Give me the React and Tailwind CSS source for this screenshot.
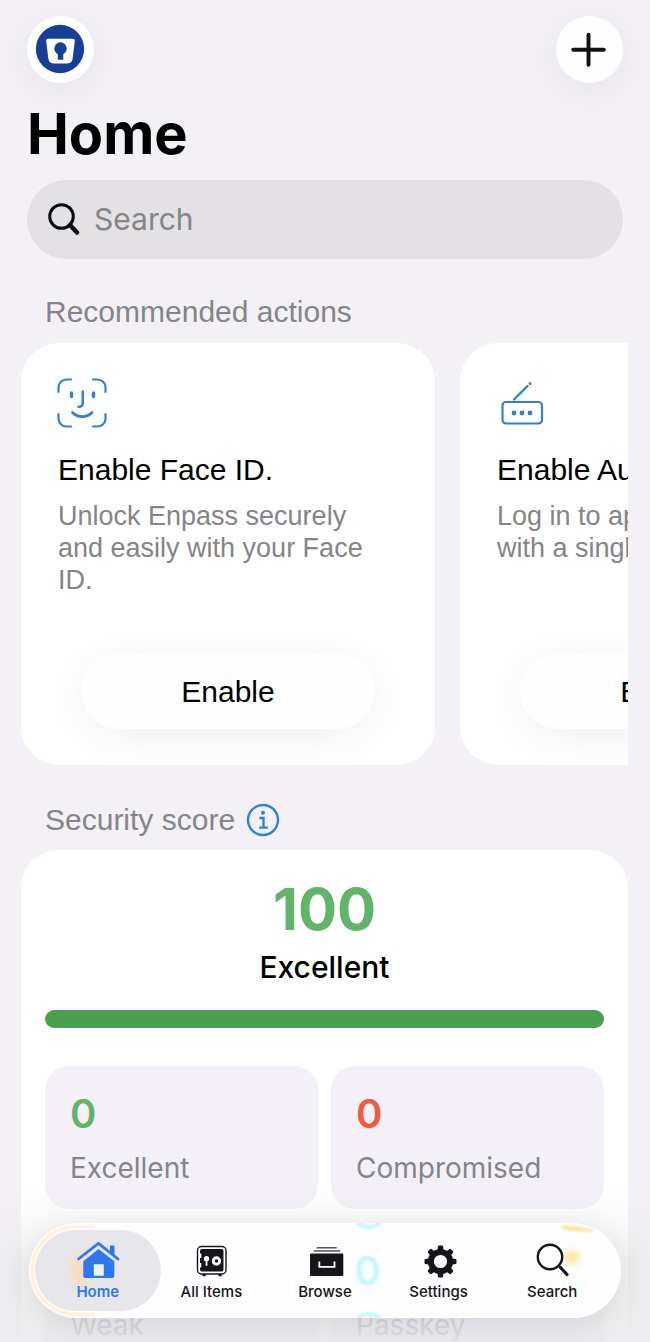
import { useState } from 'react';

const actions = [
  {
    id: 'face-id',
    icon: FaceIdIcon,
    title: 'Enable Face ID.',
    description: 'Unlock Enpass securely and easily with your Face ID.',
  },
  {
    id: 'autofill',
    icon: AutofillIcon,
    title: 'Enable AutoFill.',
    description: 'Log in to apps and sites with a single tap.',
  },
];

const scores = [
  { label: 'Excellent', value: 0, color: 'text-[#62b46a]' },
  { label: 'Compromised', value: 0, color: 'text-[#f5583f]' },
  { label: 'Weak', value: 0, color: 'text-[#ffb347]' },
  { label: 'Passkey', value: 0, color: 'text-[#3fdcff]' },
];

const tabs = [
  { id: 'home', label: 'Home', icon: HomeIcon },
  { id: 'items', label: 'All Items', icon: SafeIcon },
  { id: 'browse', label: 'Browse', icon: DrawerIcon },
  { id: 'settings', label: 'Settings', icon: GearIcon },
  { id: 'search', label: 'Search', icon: TabSearchIcon },
];

function EnpassLogo() {
  return (
    <svg viewBox="0 0 68 68" className="size-full" aria-hidden="true">
      <circle cx="33.500" cy="33.500" r="24.500" fill="#173f98" />
      <path d="M22 23h24a2.500 2.500 0 0 1 2.500 2.900l-2.200 17.600a5.500 5.500 0 0 1-5.400 4.700H27.100a5.500 5.500 0 0 1-5.400-4.700L19.500 25.900A2.500 2.500 0 0 1 22 23Z" fill="#fff" />
      <circle cx="34" cy="33" r="6.300" fill="#173f98" />
      <path d="M31.200 36h5.600v8.500h-5.600z" fill="#173f98" />
    </svg>
  );
}

function FaceIdIcon() {
  return (
    <svg viewBox="0 0 50 50" className="-ml-px h-[50px] w-[50px]" fill="none" stroke="#2f80de" strokeWidth="2.200" strokeLinecap="round" aria-hidden="true">
      <path d="M1.500 14V9.500a8 8 0 0 1 8-8H14M36 1.500h4.500a8 8 0 0 1 8 8V14M48.500 36v4.500a8 8 0 0 1-8 8H36M14 48.500H9.500a8 8 0 0 1-8-8V36" />
      <path d="M14.500 15v3.500M36.500 15v3.500" strokeWidth="3.400" />
      <path d="M25.800 13.500V25c0 2.500-1.300 3.800-4.300 3.800" strokeWidth="2.500" />
      <path d="M15.500 34.500c5.500 5.500 14 5.500 19.500 0" strokeWidth="2.800" />
    </svg>
  );
}

function AutofillIcon() {
  return (
    <svg viewBox="0 0 50 50" className="h-[50px] w-[50px]" fill="none" stroke="#2f80de" strokeWidth="2.200" strokeLinecap="round" aria-hidden="true">
      <rect x="5.500" y="24" width="39.500" height="21.500" rx="3.500" />
      <path d="M17 21.500 30.500 8" strokeWidth="2.400" />
      <circle cx="33" cy="5.500" r="1.500" fill="#2f80de" stroke="none" />
      <g fill="#2f80de" stroke="none">
        <circle cx="17" cy="35" r="2.400" />
        <circle cx="25" cy="35" r="2.400" />
        <circle cx="33" cy="35" r="2.400" />
      </g>
    </svg>
  );
}

function InfoIcon() {
  return (
    <svg viewBox="0 0 34 34" className="size-[34px]" fill="none" stroke="#2a7de8" strokeWidth="2.300" aria-hidden="true">
      <circle cx="17" cy="17" r="15" strokeWidth="2.300" />
      <circle cx="17" cy="9.700" r="2" fill="#2a7de8" stroke="none" />
      <path d="M13.500 15h4v9.500M13.200 24.700h8.600" />
    </svg>
  );
}

function HomeIcon() {
  return (
    <svg viewBox="0 0 44 40" className="h-10 w-11" aria-hidden="true">
      <path d="M34 5.500h4.500V17L34 13.500z" fill="#2e77ee" />
      <path d="M2.500 19 22.500 3.300 42 19" fill="none" stroke="#2e77ee" strokeWidth="2.800" strokeLinecap="round" strokeLinejoin="round" />
      <path d="M22.500 9 38.300 21.300V36a2 2 0 0 1-2 2H9.300a2 2 0 0 1-2-2V21.300Z" fill="#2e77ee" />
      <path d="M17.800 24.300h10v11.500h-10z" fill="#f1f0f3" />
    </svg>
  );
}

function SafeIcon() {
  return (
    <svg viewBox="0 0 44 40" className="h-10 w-11" aria-hidden="true">
      <path d="M13.500 34h3.200v2.300h-3.200zM29.500 34h3.200v2.300h-3.200z" fill="#16151a" />
      <rect x="8.500" y="6.500" width="28.500" height="27.500" rx="4" fill="#fff" stroke="#16151a" strokeWidth="1.400" />
      <rect x="11" y="9" width="23.500" height="22.500" rx="2" fill="#16151a" />
      <path d="M10.500 13.500h1.800v4.500h-1.800zM10.500 23h1.800v4.500h-1.800z" fill="#fff" />
      <circle cx="17.500" cy="18.700" r="2.700" fill="#fff" />
      <path d="M16.700 19h1.700v6.800h-1.700z" fill="#fff" />
      <circle cx="27.400" cy="21" r="3.200" fill="#16151a" stroke="#fff" strokeWidth="3" />
    </svg>
  );
}

function DrawerIcon() {
  return (
    <svg viewBox="0 0 44 40" className="h-10 w-11" fill="none" aria-hidden="true">
      <path d="M13.700 7.800h20M10.700 11h26.500" stroke="#55545a" strokeWidth="1.500" />
      <rect x="7" y="13.400" width="33.300" height="22.600" rx="1" fill="#16151a" />
      <path d="M16.300 21.500V26.800h15.200V21.500" stroke="#fff" strokeWidth="1.800" />
    </svg>
  );
}

function GearIcon() {
  return (
    <svg viewBox="0 0 44 40" className="h-10 w-11" aria-hidden="true">
      <circle cx="23.500" cy="21.500" r="9.600" fill="none" stroke="#16151a" strokeWidth="6" />
      <g fill="#16151a">
        {[0, 45, 90, 135, 180, 225, 270, 315].map((deg) => (
          <path key={deg} d="M20.300 11.500 21 6.200q.2-.7.900-.7h3.200q.7 0 .9.700l.7 5.300z" transform={`rotate(${deg} 23.5 21.5)`} />
        ))}
      </g>
    </svg>
  );
}

function TabSearchIcon() {
  return (
    <svg viewBox="0 0 44 40" className="h-10 w-11" fill="none" stroke="#16151a" strokeLinecap="round" aria-hidden="true">
      <circle cx="20" cy="17" r="12.200" strokeWidth="2.400" />
      <path d="m29 26 2 2" strokeWidth="2.400" />
      <path d="m30.500 27.500 6.500 7" strokeWidth="3.200" />
    </svg>
  );
}

function ActionCard({ action }) {
  const Icon = action.icon;
  return (
    <article className="flex h-[422px] w-[414px] shrink-0 flex-col overflow-hidden rounded-[38px] bg-white px-[37px] pt-[35px] pb-9">
      <Icon />
      <h3 className="mt-6 text-[30px] leading-9 text-black">{action.title}</h3>
      <p className="mt-3 pr-5 text-[27px] leading-8 text-[#858488]">{action.description}</p>
      <button
        type="button"
        className="mx-[23px] mt-auto h-[76px] rounded-full bg-[#fefdff] text-[30px] text-black shadow-[0_8px_40px_rgba(0,0,0,0.06)]"
      >
        Enable
      </button>
    </article>
  );
}

function ScoreTile({ score }) {
  return (
    <div className="rounded-3xl bg-[#f3f1f7] px-[25px] pt-6 pb-[23px] font-[Inter,sans-serif]">
      <div className={`text-[40px] leading-[48px] font-semibold ${score.color}`}>{score.value}</div>
      <div className="mt-3 text-[28px] leading-9 text-[#858489]">{score.label}</div>
    </div>
  );
}

function TabBar({ active, onChange }) {
  return (
    <nav className="absolute inset-x-[29px] bottom-6 flex h-[95px] overflow-hidden rounded-full bg-[#fefdff] px-3 py-[7px] font-[Inter,sans-serif] shadow-[0_6px_36px_rgba(0,0,0,0.11)]">
      {/* light caught by the glass edges */}
      <svg className="absolute inset-y-0 left-0 h-full w-20" viewBox="0 0 80 95" fill="none" aria-hidden="true">
        <path d="M66 3.500H48C23 3.500 3 23 3 47.500S23 91.500 48 91.500h18" stroke="#ffe6c8" strokeWidth="2" className="blur-[1px]" />
      </svg>
      <svg className="absolute inset-y-0 right-0 h-full w-20" viewBox="0 0 80 95" fill="none" aria-hidden="true">
        <path d="M20 4q16-1 32 4l-24-1z" fill="#ffe08a" stroke="#ffe7a6" strokeWidth="2" className="blur-[1px]" />
        <ellipse cx="31" cy="34" rx="8" ry="7" fill="#ffe6a0" className="blur-[3px]" />
      </svg>
      {/* tile numbers refracted through the bar */}
      <span className="absolute inset-y-0 left-[55%] flex items-center text-[40px] font-semibold text-[#c4f6ff] blur-[1px]" aria-hidden="true">
        0
      </span>
      <svg className="absolute inset-y-0 left-[55%] h-full w-7" viewBox="0 0 28 95" fill="none" stroke="#c4f6ff" strokeWidth="4" aria-hidden="true">
        <path d="M2 0q12 8 23 0M2 95q12-8 23 0" className="blur-[1px]" />
      </svg>
      {tabs.map((tab) => {
        const Icon = tab.icon;
        const isActive = tab.id === active;
        return (
          <button
            key={tab.id}
            type="button"
            onClick={() => onChange(tab.id)}
            aria-current={isActive ? 'page' : undefined}
            className="relative flex flex-1 flex-col items-center pt-2.5"
          >
            {isActive && (
              <span className="absolute inset-y-0 -inset-x-1.5 rounded-full bg-[#e7e6ea]">
                <span className="absolute top-6 left-9 h-8 w-5 rounded-full bg-[#f8dcc0] blur-[5px]" />
              </span>
            )}
            <span className="relative">
              <Icon />
            </span>
            <span
              className={`relative text-[15px] leading-6 whitespace-nowrap ${
                isActive ? 'font-semibold text-[#2e77ee]' : 'font-medium text-[#16151a]'
              }`}
            >
              {tab.label}
            </span>
          </button>
        );
      })}
    </nav>
  );
}

export default function App() {
  const [query, setQuery] = useState('');
  const [tab, setTab] = useState('home');

  return (
    <div className="relative h-screen overflow-hidden bg-[#f3f1f5] font-['Liberation_Sans',Arial,sans-serif]">
      <main className="h-full overflow-y-auto pb-36 [scrollbar-width:none]">
        <header className="px-[27px] pt-4">
          <div className="flex justify-between">
            <button type="button" aria-label="Vaults" className="size-[67px] rounded-full bg-[#fefdff] shadow-[0_8px_36px_rgba(0,0,0,0.06)]">
              <EnpassLogo />
            </button>
            <button type="button" aria-label="Add item" className="size-[67px] rounded-full bg-[#fefdff] shadow-[0_8px_36px_rgba(0,0,0,0.06)]">
              <svg viewBox="0 0 68 68" className="size-full" fill="none" stroke="#111" strokeWidth="4" strokeLinecap="round" aria-hidden="true">
                <path d="M33 19v30.500M17.500 34.200h31" />
              </svg>
            </button>
          </div>
          <h1 className="mt-[19px] font-[Inter,sans-serif] text-[56px] leading-[64px] font-bold text-black">Home</h1>
          <label className="mt-3.5 flex h-[79px] items-center gap-[11px] rounded-full bg-[#e3e1e4] px-5">
            <svg viewBox="0 0 36 36" className="size-9 shrink-0" fill="none" stroke="#0b0b0d" strokeLinecap="round" aria-hidden="true">
              <circle cx="14.500" cy="14.500" r="11.800" strokeWidth="3" />
              <path d="m23 23 7 7.500" strokeWidth="4.500" />
            </svg>
            <input
              type="search"
              aria-label="Search"
              value={query}
              onChange={(e) => setQuery(e.target.value)}
              placeholder="Search"
              className="min-w-0 flex-1 bg-transparent font-[Inter,sans-serif] text-[30px] text-black outline-none placeholder:text-[#858488]"
            />
          </label>
        </header>

        <section>
          <h2 className="mt-[35px] px-[45px] text-[30px] leading-9 text-[#858488]">Recommended actions</h2>
          <div className="mr-[22px] ml-[21px] mt-[13px] flex gap-[25px] overflow-x-auto [scrollbar-width:none]">
            {actions.map((action) => (
              <ActionCard key={action.id} action={action} />
            ))}
          </div>
        </section>

        <section>
          <div className="mt-[37px] flex h-9 items-center gap-[11px] px-[45px]">
            <h2 className="text-[30px] leading-9 text-[#858488]">Security score</h2>
            <button type="button" aria-label="About the security score">
              <InfoIcon />
            </button>
          </div>
          <div className="mr-[22px] ml-[21px] mt-3 rounded-[38px] bg-white px-6 pt-[27px] pb-6">
            <div className="text-center font-[Inter,sans-serif]">
              <div className="text-[58px] leading-[64px] font-bold text-[#62b46a]">100</div>
              <div className="mt-2 text-[30px] leading-9 font-medium text-black">Excellent</div>
            </div>
            <div className="mt-[25px] h-[18px] rounded-full bg-[#4aa04e]" />
            <div className="mt-[38px] grid grid-cols-2 gap-x-[13px] gap-y-3.5">
              {scores.map((score) => (
                <ScoreTile key={score.label} score={score} />
              ))}
            </div>
          </div>
        </section>
      </main>

      <div className="pointer-events-none absolute inset-x-0 bottom-0 h-40 bg-linear-to-b from-[#ebeaec]/0 via-[#ebeaec]/50 to-[#ebeaec]/90" />
      <TabBar active={tab} onChange={setTab} />
    </div>
  );
}
